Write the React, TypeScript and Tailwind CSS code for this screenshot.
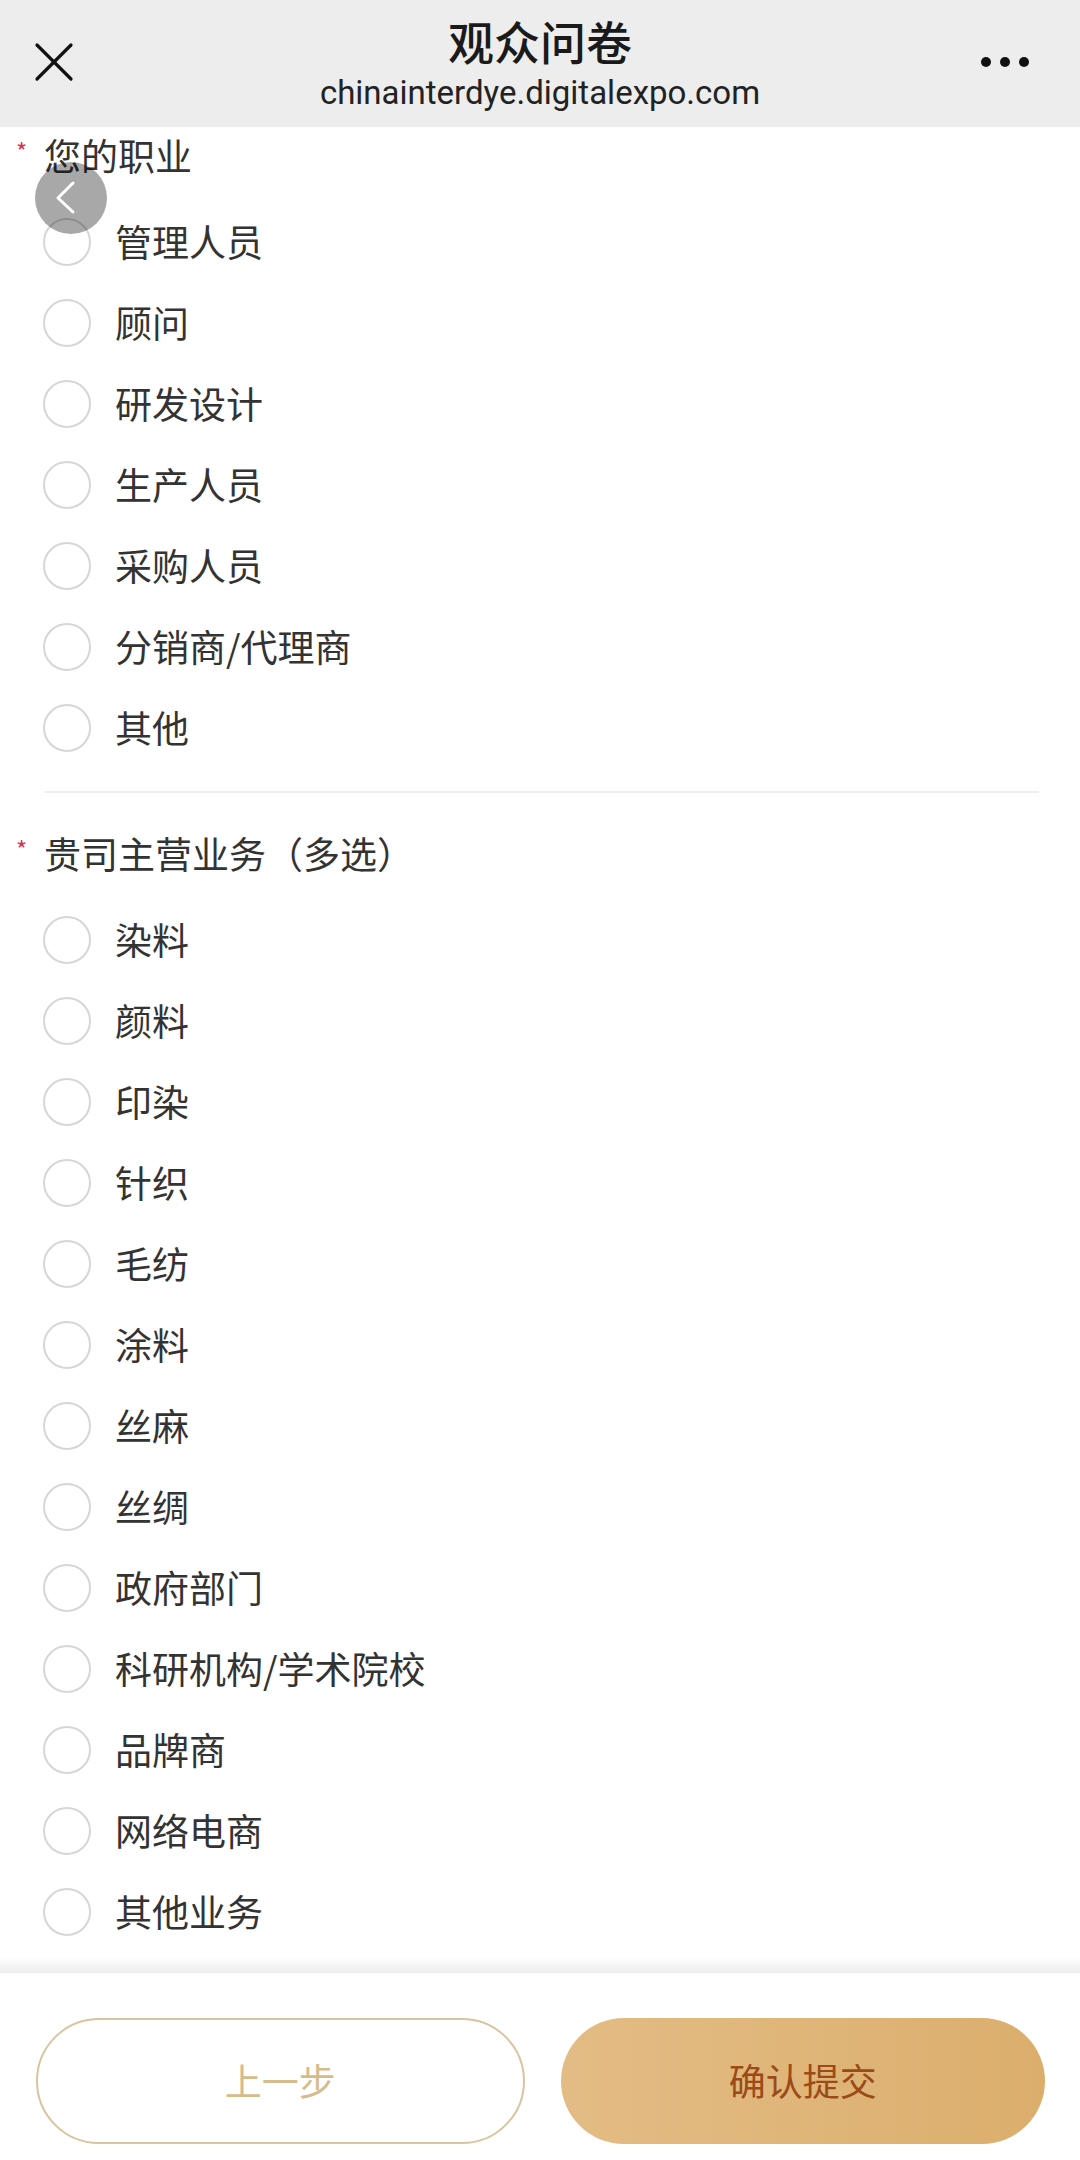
const jobOptions = ["管理人员", "顾问", "研发设计", "生产人员", "采购人员", "分销商/代理商", "其他"]

const businessOptions = [
  "染料",
  "颜料",
  "印染",
  "针织",
  "毛纺",
  "涂料",
  "丝麻",
  "丝绸",
  "政府部门",
  "科研机构/学术院校",
  "品牌商",
  "网络电商",
  "其他业务",
]

function QuestionLabel({ text }: { text: string }) {
  return (
    <div className="flex h-[52px] items-center pl-[16px]">
      <span className="w-[28px] self-start pt-[10px] text-[24px] leading-none text-[#d9304f]">*</span>
      <span className="text-[37px] leading-[52px] text-[#333333]">{text}</span>
    </div>
  )
}

function OptionRow({ label }: { label: string }) {
  return (
    <div className="flex h-[81px] items-center pl-[43px]">
      <div className="h-[48px] w-[48px] shrink-0 rounded-full border-2 border-[#d6d6d6] bg-white" />
      <span className="ml-[24px] text-[37px] leading-none text-[#333333]">{label}</span>
    </div>
  )
}

export default function App() {
  return (
    <div className="relative flex min-h-[2160px] w-[1080px] flex-col bg-white font-['Noto_Sans_CJK_SC','Noto_Sans',sans-serif]">
      {/* top bar */}
      <div className="relative flex h-[127px] flex-col items-center bg-[#ededed] pt-[13px]">
        <svg
          className="absolute left-[34px] top-[42px]"
          width="40"
          height="40"
          viewBox="0 0 40 40"
          fill="none"
          stroke="#111111"
          strokeWidth="3.2"
          strokeLinecap="round"
        >
          <path d="M3 3 L37 37" />
          <path d="M37 3 L3 37" />
        </svg>
        <h1 className="text-[46px] font-medium leading-[54px] text-[#1a1a1a]">观众问卷</h1>
        <p className="mt-[8px] font-['Roboto','Noto_Sans',sans-serif] text-[33px] leading-[36px] text-[#222222]">
          chinainterdye.digitalexpo.com
        </p>
        <div className="absolute right-[51px] top-[57px] flex gap-[9px]">
          <span className="h-[10px] w-[10px] rounded-full bg-[#111111]" />
          <span className="h-[10px] w-[10px] rounded-full bg-[#111111]" />
          <span className="h-[10px] w-[10px] rounded-full bg-[#111111]" />
        </div>
      </div>

      {/* floating back button */}
      <div className="absolute left-[35px] top-[162px] z-10 h-[72px] w-[72px] rounded-full bg-black/[0.34]">
        <svg width="72" height="72" viewBox="0 0 72 72" fill="none" stroke="#ffffff" strokeWidth="3" strokeLinecap="round" strokeLinejoin="round">
          <path d="M38 21 L23 36 L38 50" />
        </svg>
      </div>

      {/* questions */}
      <div className="pt-[2px]">
        <QuestionLabel text="您的职业" />
        <div className="mt-[20px]">
          {jobOptions.map((o) => (
            <OptionRow key={o} label={o} />
          ))}
        </div>

        <div className="ml-[44px] mr-[41px] mt-[23px] h-[2px] bg-[#efefef]" />

        <div className="mt-[34px]">
          <QuestionLabel text="贵司主营业务（多选）" />
        </div>
        <div className="mt-[20px]">
          {businessOptions.map((o) => (
            <OptionRow key={o} label={o} />
          ))}
        </div>
      </div>

      {/* bottom actions */}
      <div className="mt-[5px] h-[16px] bg-linear-to-b from-white to-[#ececec]" />
      <div className="flex h-[187px] gap-[36px] bg-white pl-[36px] pr-[35px] pt-[45px]">
        <button className="flex h-[126px] flex-1 items-center justify-center rounded-full border-2 border-[#d8c49f] bg-white text-[37px] text-[#d6bc8c]">
          上一步
        </button>
        <button className="flex h-[126px] flex-1 items-center justify-center rounded-full bg-linear-to-r from-[#e3bc85] to-[#dbae6c] text-[37px] text-[#9c4a17]">
          确认提交
        </button>
      </div>
    </div>
  )
}
